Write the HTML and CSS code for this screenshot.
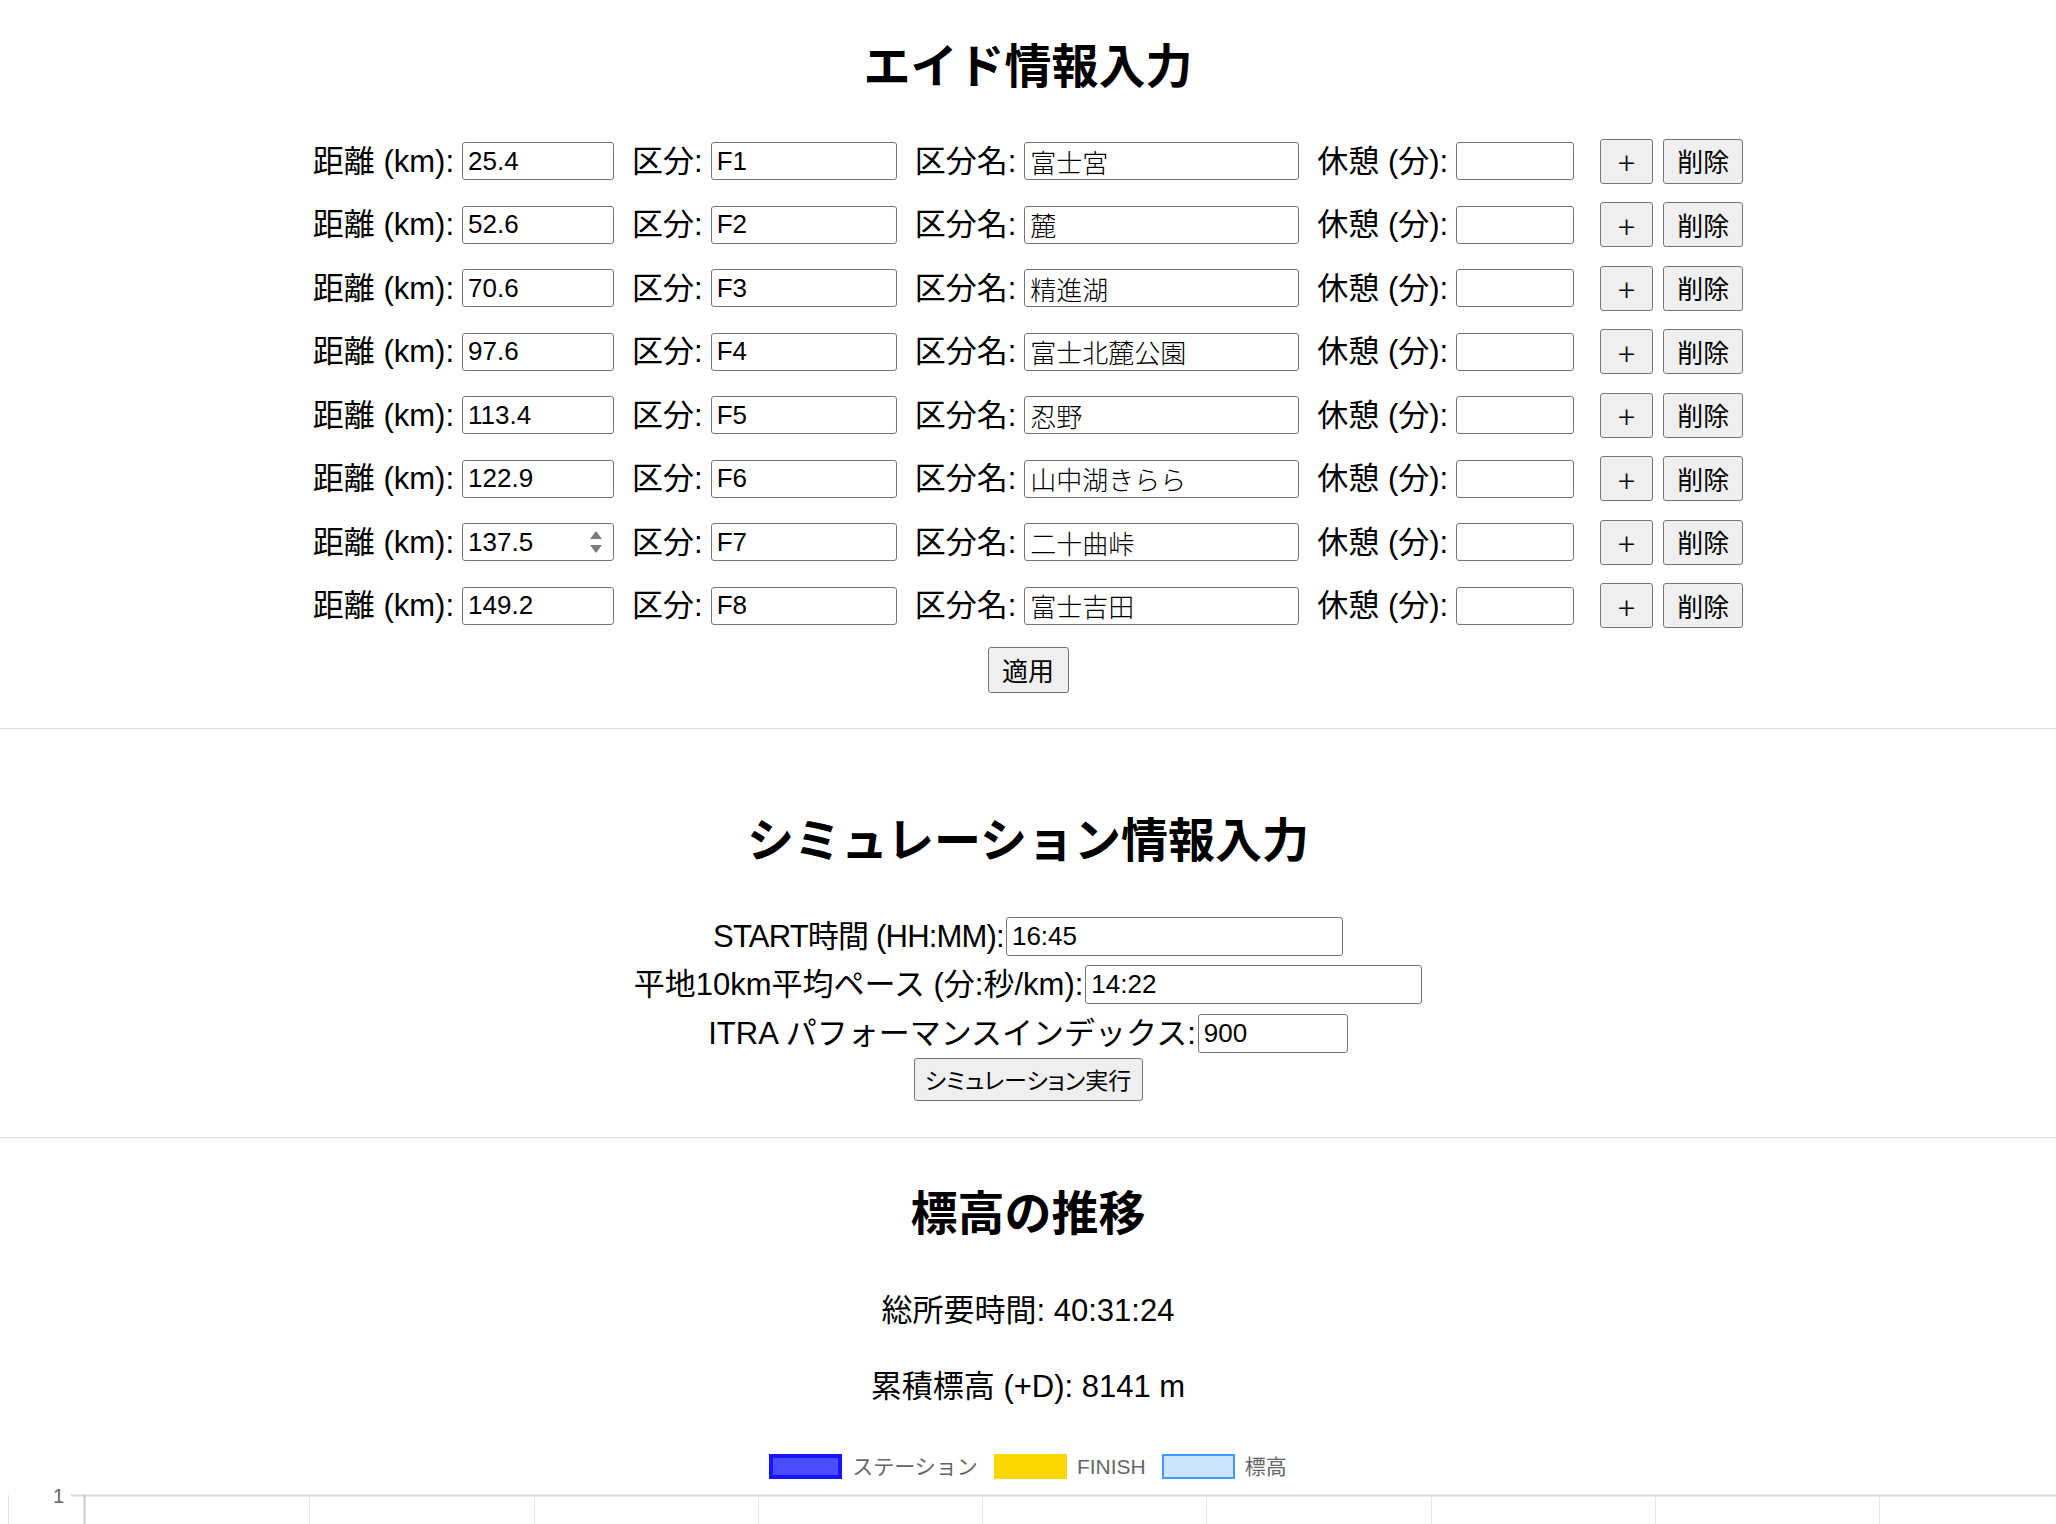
FILE: index.html
```html
<!DOCTYPE html>
<html lang="ja">
<head>
<meta charset="utf-8">
<title>エイド情報入力</title>
<link rel="stylesheet" href="styles.css">
</head>
<body>
<section class="aid">
  <h1 class="section-title">エイド情報入力</h1>
  <div class="aid-rows">
    <div class="aid-row">
      <div class="field"><span class="field-label">距離 (km):</span><input class="inp w-dist" type="text" value="25.4"></div>
      <div class="field"><span class="field-label">区分:</span><input class="inp w-sec" type="text" value="F1"></div>
      <div class="field"><span class="field-label">区分名:</span><input class="inp w-name" type="text" value="富士宮"></div>
      <div class="field field-last"><span class="field-label">休憩 (分):</span><input class="inp w-rest" type="text" value=""></div>
      <button class="btn btn-add">+</button><button class="btn btn-del">削除</button>
    </div>
    <div class="aid-row">
      <div class="field"><span class="field-label">距離 (km):</span><input class="inp w-dist" type="text" value="52.6"></div>
      <div class="field"><span class="field-label">区分:</span><input class="inp w-sec" type="text" value="F2"></div>
      <div class="field"><span class="field-label">区分名:</span><input class="inp w-name" type="text" value="麓"></div>
      <div class="field field-last"><span class="field-label">休憩 (分):</span><input class="inp w-rest" type="text" value=""></div>
      <button class="btn btn-add">+</button><button class="btn btn-del">削除</button>
    </div>
    <div class="aid-row">
      <div class="field"><span class="field-label">距離 (km):</span><input class="inp w-dist" type="text" value="70.6"></div>
      <div class="field"><span class="field-label">区分:</span><input class="inp w-sec" type="text" value="F3"></div>
      <div class="field"><span class="field-label">区分名:</span><input class="inp w-name" type="text" value="精進湖"></div>
      <div class="field field-last"><span class="field-label">休憩 (分):</span><input class="inp w-rest" type="text" value=""></div>
      <button class="btn btn-add">+</button><button class="btn btn-del">削除</button>
    </div>
    <div class="aid-row">
      <div class="field"><span class="field-label">距離 (km):</span><input class="inp w-dist" type="text" value="97.6"></div>
      <div class="field"><span class="field-label">区分:</span><input class="inp w-sec" type="text" value="F4"></div>
      <div class="field"><span class="field-label">区分名:</span><input class="inp w-name" type="text" value="富士北麓公園"></div>
      <div class="field field-last"><span class="field-label">休憩 (分):</span><input class="inp w-rest" type="text" value=""></div>
      <button class="btn btn-add">+</button><button class="btn btn-del">削除</button>
    </div>
    <div class="aid-row">
      <div class="field"><span class="field-label">距離 (km):</span><input class="inp w-dist" type="text" value="113.4"></div>
      <div class="field"><span class="field-label">区分:</span><input class="inp w-sec" type="text" value="F5"></div>
      <div class="field"><span class="field-label">区分名:</span><input class="inp w-name" type="text" value="忍野"></div>
      <div class="field field-last"><span class="field-label">休憩 (分):</span><input class="inp w-rest" type="text" value=""></div>
      <button class="btn btn-add">+</button><button class="btn btn-del">削除</button>
    </div>
    <div class="aid-row">
      <div class="field"><span class="field-label">距離 (km):</span><input class="inp w-dist" type="text" value="122.9"></div>
      <div class="field"><span class="field-label">区分:</span><input class="inp w-sec" type="text" value="F6"></div>
      <div class="field"><span class="field-label">区分名:</span><input class="inp w-name" type="text" value="山中湖きらら"></div>
      <div class="field field-last"><span class="field-label">休憩 (分):</span><input class="inp w-rest" type="text" value=""></div>
      <button class="btn btn-add">+</button><button class="btn btn-del">削除</button>
    </div>
    <div class="aid-row">
      <div class="field"><span class="field-label">距離 (km):</span><span class="spin-wrap"><input class="inp w-dist" type="text" value="137.5"><svg class="spinner" width="14" height="30" viewBox="0 0 14 30"><polygon points="1,12 13,12 7,4" fill="#7a7a7a"/><polygon points="1,18 13,18 7,26" fill="#7a7a7a"/></svg></span></div>
      <div class="field"><span class="field-label">区分:</span><input class="inp w-sec" type="text" value="F7"></div>
      <div class="field"><span class="field-label">区分名:</span><input class="inp w-name" type="text" value="二十曲峠"></div>
      <div class="field field-last"><span class="field-label">休憩 (分):</span><input class="inp w-rest" type="text" value=""></div>
      <button class="btn btn-add">+</button><button class="btn btn-del">削除</button>
    </div>
    <div class="aid-row">
      <div class="field"><span class="field-label">距離 (km):</span><input class="inp w-dist" type="text" value="149.2"></div>
      <div class="field"><span class="field-label">区分:</span><input class="inp w-sec" type="text" value="F8"></div>
      <div class="field"><span class="field-label">区分名:</span><input class="inp w-name" type="text" value="富士吉田"></div>
      <div class="field field-last"><span class="field-label">休憩 (分):</span><input class="inp w-rest" type="text" value=""></div>
      <button class="btn btn-add">+</button><button class="btn btn-del">削除</button>
    </div>
    <button class="btn btn-apply">適用</button>
  </div>
</section>
<hr class="divider divider-1">
<section class="sim">
  <h2 class="section-title">シミュレーション情報入力</h2>
  <div class="sim-rows">
    <div class="sim-row"><span class="sim-label sim-label-start">START時間 (HH:MM):</span><input class="inp w-start" type="text" value="16:45"></div>
    <div class="sim-row"><span class="sim-label">平地10km平均ペース (分:秒/km):</span><input class="inp w-pace" type="text" value="14:22"></div>
    <div class="sim-row"><span class="sim-label">ITRA パフォーマンスインデックス:</span><input class="inp w-itra" type="text" value="900"></div>
    <button class="btn btn-run">シミュレーション実行</button>
  </div>
</section>
<hr class="divider divider-2">
<section class="result">
  <h2 class="section-title result-title">標高の推移</h2>
  <p class="stat stat-1">総所要時間: 40:31:24</p>
  <p class="stat stat-2">累積標高 (+D): 8141 m</p>
  <div class="legend">
    <span class="legend-box box-station"></span><span class="legend-text">ステーション</span>
    <span class="legend-box box-finish"></span><span class="legend-text">FINISH</span>
    <span class="legend-box box-elev"></span><span class="legend-text">標高</span>
  </div>
  <svg class="chart" width="2056" height="60" viewBox="0 0 2056 60">
    <line x1="8.5" y1="10" x2="8.5" y2="60" stroke="#e2e2e2" stroke-width="1"/>
    <line x1="71" y1="10.5" x2="2056" y2="10.5" stroke="#dadada" stroke-width="2"/>
    <line x1="84.5" y1="10" x2="84.5" y2="60" stroke="#c8c8c8" stroke-width="2"/>
    <line x1="309.5" y1="11" x2="309.5" y2="60" stroke="#e6e6e6" stroke-width="1"/>
    <line x1="534.5" y1="11" x2="534.5" y2="60" stroke="#e6e6e6" stroke-width="1"/>
    <line x1="758.5" y1="11" x2="758.5" y2="60" stroke="#e6e6e6" stroke-width="1"/>
    <line x1="982.5" y1="11" x2="982.5" y2="60" stroke="#e6e6e6" stroke-width="1"/>
    <line x1="1206.5" y1="11" x2="1206.5" y2="60" stroke="#e6e6e6" stroke-width="1"/>
    <line x1="1431.5" y1="11" x2="1431.5" y2="60" stroke="#e6e6e6" stroke-width="1"/>
    <line x1="1655.5" y1="11" x2="1655.5" y2="60" stroke="#e6e6e6" stroke-width="1"/>
    <line x1="1879.5" y1="11" x2="1879.5" y2="60" stroke="#e6e6e6" stroke-width="1"/>
    <text x="64" y="18" text-anchor="end" class="axis-label">1</text>
  </svg>
</section>
</body>
</html>
```
FILE: styles.css
```css
* {
  box-sizing: border-box;
}

body {
  margin: 0;
  background: #fff;
  color: #000;
  font-family: "Liberation Sans", "Noto Sans CJK JP", sans-serif;
}

.section-title {
  margin: 0;
  font-family: "Noto Sans CJK JP", sans-serif;
  font-weight: 700;
  font-size: 47px;
  line-height: 56px;
  text-align: center;
}

/* ---------- aid section ---------- */
.aid {
  padding-top: 35px;
}

.aid-rows {
  margin-top: 47.5px;
  display: flex;
  flex-direction: column;
  align-items: center;
  gap: 18.5px;
}

.aid-row {
  display: flex;
  justify-content: center;
  align-items: center;
  height: 45px;
}

.field {
  display: flex;
  align-items: center;
  margin-right: 18px;
}

.field-last {
  margin-right: 26px;
}

.field-label {
  font-size: 31px;
  line-height: 1;
  margin-right: 8px;
  white-space: nowrap;
}

.inp {
  height: 38px;
  padding: 0 5px;
  border: 1px solid #767676;
  border-radius: 3px;
  background: #fff;
  color: #000;
  font-family: "Liberation Sans", "Noto Sans CJK JP", sans-serif;
  font-weight: 300;
  font-size: 26px;
  outline: none;
}

.w-dist { width: 152px; }
.w-sec { width: 186px; }
.w-name { width: 275px; }
.w-rest { width: 118px; }

.spin-wrap {
  position: relative;
  display: inline-flex;
}

.spinner {
  position: absolute;
  right: 11px;
  top: 4px;
}

.btn {
  height: 45px;
  padding: 0;
  border: 1px solid #767676;
  border-radius: 3px;
  background: #efefef;
  color: #000;
  font-family: "Noto Sans CJK JP", sans-serif;
  font-size: 26px;
  line-height: 1;
}

.btn-add {
  width: 53px;
  margin-right: 10px;
  font-size: 32px;
  font-weight: 300;
}

.btn-del {
  width: 80px;
}

.btn-apply {
  width: 81px;
  height: 46px;
}

.divider {
  margin: 0;
  border: 0;
  border-top: 1px solid #dcdcdc;
}

.divider-1 {
  margin-top: 35px;
}

/* ---------- simulation section ---------- */
.sim {
  padding-top: 80px;
}

.sim-rows {
  margin-top: 52px;
  display: flex;
  flex-direction: column;
  align-items: center;
  gap: 9.5px;
}

.sim-row {
  display: flex;
  justify-content: center;
  align-items: center;
  height: 39px;
}

.sim-label {
  font-size: 31px;
  line-height: 1;
  margin-right: 2px;
  white-space: nowrap;
}

.sim-label-start {
  letter-spacing: -0.8px;
}

.sim-row .inp {
  height: 39px;
}

.w-start { width: 337px; }
.w-pace { width: 337px; }
.w-itra { width: 150px; }

.btn-run {
  margin-top: -4px;
  width: 229px;
  height: 43px;
  font-size: 23px;
  font-feature-settings: "palt";
}

.divider-2 {
  margin-top: 36px;
}

/* ---------- result section ---------- */
.result {
  padding-top: 44px;
}

.stat {
  margin: 0;
  font-size: 31px;
  line-height: 40px;
  text-align: center;
}

.stat-1 {
  margin-top: 53px;
}

.stat-2 {
  margin-top: 36px;
}

.legend {
  margin-top: 47px;
  display: flex;
  justify-content: center;
  align-items: center;
  height: 25px;
  font-size: 21px;
  color: #666;
}

.legend-box {
  width: 73px;
  height: 25px;
  margin-right: 10px;
}

.legend-text {
  margin-right: 16px;
  line-height: 1;
}

.legend-text:last-child {
  margin-right: 0;
}

.box-station {
  background: #4b4bff;
  border: 4px solid #1616ff;
}

.box-finish {
  background: #ffd700;
}

.box-elev {
  background: #cce5ff;
  border: 2px solid #3d9bff;
}

.chart {
  display: block;
  margin-top: 6px;
}

.axis-label {
  font-family: "Liberation Sans", sans-serif;
  font-size: 20px;
  fill: #666;
}
```
